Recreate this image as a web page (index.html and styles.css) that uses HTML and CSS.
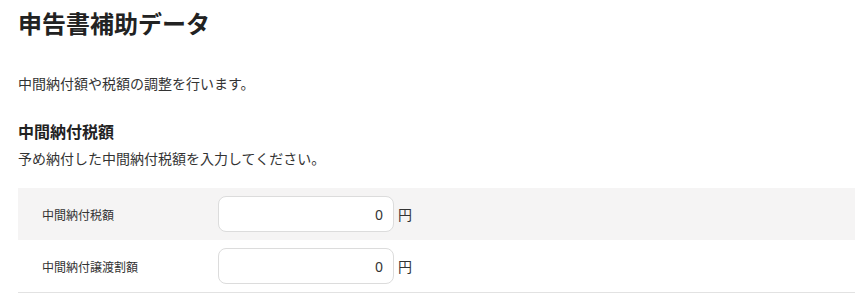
FILE: index.html
```html
<!DOCTYPE html>
<html lang="ja">
<head>
<meta charset="utf-8">
<link rel="stylesheet" href="styles.css">
</head>
<body>
<main class="page">
  <h1 class="title">申告書補助データ</h1>
  <p class="lead">中間納付額や税額の調整を行います。</p>
  <h2 class="section-title">中間納付税額</h2>
  <p class="section-desc">予め納付した中間納付税額を入力してください。</p>
  <div class="form-table">
    <div class="form-row shaded">
      <div class="form-label">中間納付税額</div>
      <div class="form-field">
        <input class="amount" type="text" value="0">
        <span class="unit">円</span>
      </div>
    </div>
    <div class="form-row bordered">
      <div class="form-label">中間納付譲渡割額</div>
      <div class="form-field">
        <input class="amount" type="text" value="0">
        <span class="unit">円</span>
      </div>
    </div>
  </div>
</main>
</body>
</html>
```
FILE: styles.css
```css
* { box-sizing: border-box; }
html, body {
  margin: 0;
  padding: 0;
  background: #fff;
}
body {
  font-family: "Noto Sans CJK JP", "Noto Sans", sans-serif;
  color: #333;
}
.page {
  padding: 0 0 0 18px;
}
.title {
  margin: 5px 0 0;
  font-size: 24px;
  line-height: 36px;
  font-weight: 700;
  color: #222;
}
.lead {
  margin: 32px 0 0;
  font-size: 14px;
  line-height: 21px;
}
.section-title {
  margin: 25px 0 0;
  font-size: 16px;
  line-height: 24px;
  font-weight: 700;
  color: #222;
}
.section-desc {
  margin: 5px 0 0;
  font-size: 14px;
  line-height: 21px;
}
.form-table {
  margin-top: 19px;
}
.form-row {
  display: flex;
  align-items: center;
  height: 52px;
}
.form-row.shaded {
  background: #f5f4f4;
}
.form-row.bordered {
  border-bottom: 1px solid #e2e2e2;
  height: 53px;
}
.form-label {
  width: 200px;
  padding-left: 24px;
  font-size: 12px;
  color: #333;
}
.form-field {
  display: flex;
  align-items: center;
  gap: 4px;
}
.amount {
  width: 176px;
  height: 36px;
  border: 1px solid #dcdcdc;
  border-radius: 8px;
  background: #fff;
  padding: 0 10px;
  text-align: right;
  font-family: "Noto Sans", "Noto Sans CJK JP", sans-serif;
  font-size: 14px;
  color: #333;
  outline: none;
}
.unit {
  font-size: 14px;
  color: #333;
}
```
